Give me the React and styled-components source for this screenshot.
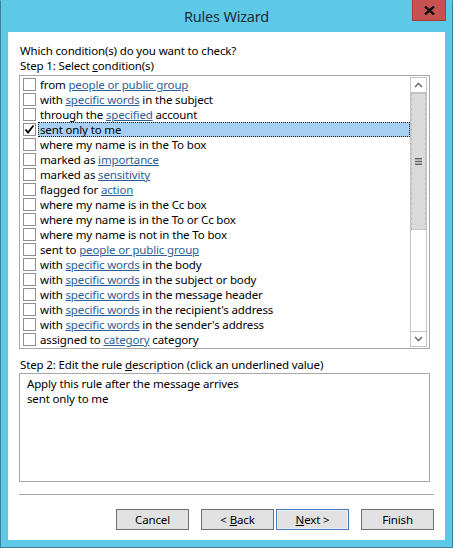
import React from "react";
import styled, { createGlobalStyle, css } from "styled-components";

const GlobalStyle = createGlobalStyle`
  html, body {
    margin: 0;
    padding: 0;
    width: 453px;
    height: 548px;
    overflow: hidden;
    background: #ffffff;
  }
  * {
    box-sizing: border-box;
  }
`;

const FONT = `"Noto Sans", "Open Sans", sans-serif`;

const conditions = [
  ["from ", { link: "people or public group" }],
  ["with ", { link: "specific words" }, " in the subject"],
  ["through the ", { link: "specified" }, " account"],
  ["sent only to me"],
  ["where my name is in the To box"],
  ["marked as ", { link: "importance" }],
  ["marked as ", { link: "sensitivity" }],
  ["flagged for ", { link: "action" }],
  ["where my name is in the Cc box"],
  ["where my name is in the To or Cc box"],
  ["where my name is not in the To box"],
  ["sent to ", { link: "people or public group" }],
  ["with ", { link: "specific words" }, " in the body"],
  ["with ", { link: "specific words" }, " in the subject or body"],
  ["with ", { link: "specific words" }, " in the message header"],
  ["with ", { link: "specific words" }, " in the recipient's address"],
  ["with ", { link: "specific words" }, " in the sender's address"],
  ["assigned to ", { link: "category" }, " category"],
];

const SELECTED = 3;

const Window = styled.div`
  width: 453px;
  height: 548px;
  background: #5ec9e7;
  border: 1px solid #3f7f96;
  border-top-color: #5ec9e7;
  display: flex;
  flex-direction: column;
  padding: 0 7px 7px 7px;
  font-family: ${FONT};
`;

const TitleBar = styled.div`
  height: 31px;
  flex: none;
  display: grid;
  grid-template-columns: 1fr auto 1fr;
  align-items: start;
`;

const Title = styled.div`
  grid-column: 2;
  padding-top: 5px;
  font-size: 14.5px;
  letter-spacing: -0.2px;
  color: #1c2f38;
  line-height: 20px;
`;

const CloseButton = styled.div`
  grid-column: 3;
  justify-self: end;
  width: 34px;
  height: 21px;
  margin-right: -1px;
  margin-top: -1px;
  background: #c75050;
  border: 1px solid #a43c3c;
  border-top: none;
  display: flex;
  align-items: center;
  justify-content: center;
`;

const Client = styled.div`
  flex: 1;
  background: #ffffff;
  display: flex;
  flex-direction: column;
  padding: 11px 11px 10px 11px;
  font-size: 11.5px;
  letter-spacing: -0.15px;
  color: #000;
`;

const Label = styled.div`
  line-height: 15px;
  padding-left: 1px;
  margin-bottom: ${({ $mb = 0 }) => $mb}px;
  margin-top: ${({ $mt = 0 }) => $mt}px;
  white-space: nowrap;
`;

const Key = styled.span`
  text-decoration: underline;
  text-underline-offset: 1px;
`;

const ListBox = styled.div`
  margin-right: 4px;
  height: 274px;
  border: 1px solid #a8a8a8;
  padding: 1px;
  display: flex;
`;

const Rows = styled.div`
  flex: 1;
  display: flex;
  flex-direction: column;
`;

const Row = styled.div`
  height: 15px;
  display: flex;
  align-items: center;
  padding-left: 2px;
  gap: 2px;
`;

const Box = styled.div`
  width: 13px;
  height: 13px;
  flex: none;
  border: 1px solid #8e8f8f;
  background: #fff;
  display: flex;
  align-items: center;
  justify-content: center;
`;

const RowText = styled.div`
  flex: 1;
  height: 15px;
  line-height: 13px;
  padding: 0 1px;
  white-space: nowrap;
  border: 1px solid transparent;
  ${({ $selected }) =>
    $selected &&
    css`
      background: #a6cff3;
      border: 1px dotted #1a1a1a;
    `}
`;

const Link = styled.span`
  color: #2c5e98;
  text-decoration: underline;
  text-underline-offset: 1px;
`;

const ScrollBar = styled.div`
  width: 17px;
  flex: none;
  margin-right: 1px;
  display: flex;
  flex-direction: column;
  border-left: 1px solid #c4c4c4;
  border-right: 1px solid #c4c4c4;
`;

const ArrowButton = styled.div`
  height: 16px;
  flex: none;
  background: #fff;
  border: 1px solid #c4c4c4;
  margin: 0 -1px;
  display: flex;
  align-items: center;
  justify-content: center;
`;

const Thumb = styled.div`
  height: 137px;
  flex: none;
  background: #dadada;
  border: 1px dashed #bdbdbd;
  display: flex;
  align-items: center;
  justify-content: center;
`;

const Track = styled.div`
  flex: 1;
  background: #fff;
`;

const DescBox = styled.div`
  margin-right: 4px;
  margin-top: 1px;
  height: 109px;
  border: 1px solid #a8a8a8;
  padding: 2px 7px;
  line-height: 15px;
`;

const Separator = styled.div`
  height: 1px;
  background: #a8a8a8;
  margin-top: 12px;
`;

const ButtonRow = styled.div`
  display: flex;
  justify-content: flex-end;
  margin-top: 14px;
`;

const Button = styled.div`
  width: 73px;
  height: 21px;
  margin-left: ${({ $gap = 0 }) => $gap}px;
  background: #e1e1e1;
  border: 1px solid ${({ $focused }) => ($focused ? "#4a78c2" : "#707070")};
  box-shadow: ${({ $focused }) => ($focused ? "inset 0 0 0 1px #e6eef8" : "none")};
  display: flex;
  align-items: center;
  justify-content: center;
  font-size: 11.5px;
  line-height: 15px;
  color: #000;
`;

const Condition = ({ parts, selected }) => (
  <Row>
    <Box>
      {selected && (
        <svg width="11" height="11" viewBox="0 0 11 11">
          <path d="M1.5 5.5 L4 8.5 L9.5 1.5" fill="none" stroke="#000" strokeWidth="1.8" />
        </svg>
      )}
    </Box>
    <RowText $selected={selected}>
      {parts.map((p, i) =>
        typeof p === "string" ? <span key={i}>{p}</span> : <Link key={i}>{p.link}</Link>
      )}
    </RowText>
  </Row>
);

export default function App() {
  return (
    <>
      <GlobalStyle />
      <Window>
        <TitleBar>
          <Title>Rules Wizard</Title>
          <CloseButton>
            <svg width="11" height="9" viewBox="0 0 11 9">
              <path d="M1 0.5 L10 8.5 M10 0.5 L1 8.5" stroke="#111" strokeWidth="2.4" />
            </svg>
          </CloseButton>
        </TitleBar>
        <Client>
          <Label>Which condition(s) do you want to check?</Label>
          <Label $mb={2}>
            Step 1: Select <Key>c</Key>ondition(s)
          </Label>
          <ListBox>
            <Rows>
              {conditions.map((parts, i) => (
                <Condition key={i} parts={parts} selected={i === SELECTED} />
              ))}
            </Rows>
            <ScrollBar>
              <ArrowButton>
                <svg width="9" height="6" viewBox="0 0 9 6">
                  <path d="M1 5 L4.5 1.5 L8 5" fill="none" stroke="#606060" strokeWidth="1.3" />
                </svg>
              </ArrowButton>
              <Thumb>
                <svg width="7" height="7" viewBox="0 0 7 7">
                  <rect x="0" y="0" width="7" height="1.4" fill="#606060" />
                  <rect x="0" y="2.8" width="7" height="1.4" fill="#606060" />
                  <rect x="0" y="5.6" width="7" height="1.4" fill="#606060" />
                </svg>
              </Thumb>
              <Track />
              <ArrowButton>
                <svg width="9" height="6" viewBox="0 0 9 6">
                  <path d="M1 1 L4.5 4.5 L8 1" fill="none" stroke="#606060" strokeWidth="1.3" />
                </svg>
              </ArrowButton>
            </ScrollBar>
          </ListBox>
          <Label $mt={8}>
            Step 2: Edit the rule <Key>d</Key>escription (click an underlined value)
          </Label>
          <DescBox>
            <div>Apply this rule after the message arrives</div>
            <div>sent only to me</div>
          </DescBox>
          <Separator />
          <ButtonRow>
            <Button>Cancel</Button>
            <Button $gap={12}>
              &lt;&nbsp;<Key>B</Key>ack
            </Button>
            <Button $gap={2} $focused>
              <Key>N</Key>ext&nbsp;&gt;
            </Button>
            <Button $gap={12}>Finish</Button>
          </ButtonRow>
        </Client>
      </Window>
    </>
  );
}
